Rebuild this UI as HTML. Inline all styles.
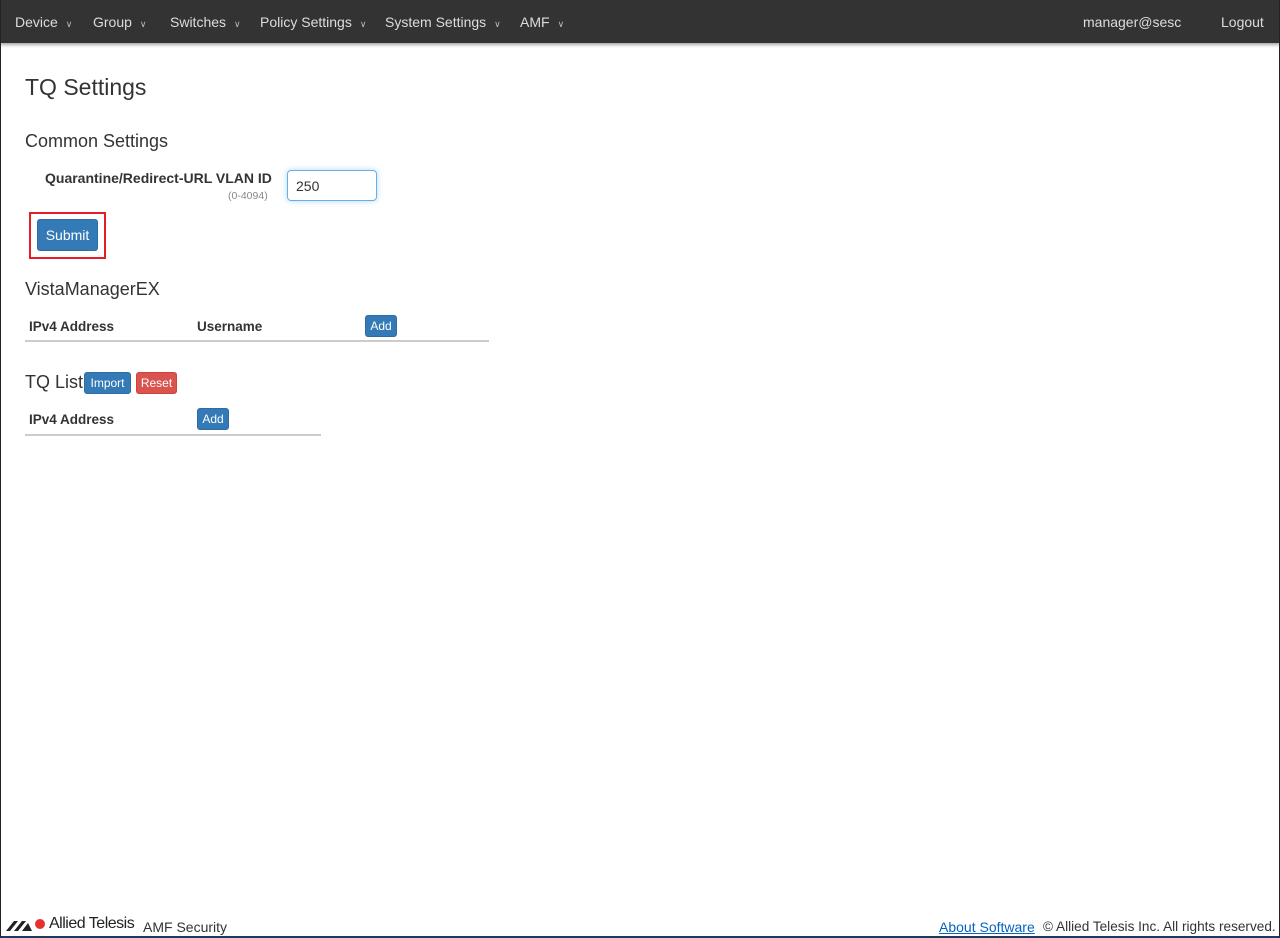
<!DOCTYPE html>
<html><head><style>
*{box-sizing:border-box}
body{margin:0;width:1280px;height:938px;position:relative;font-family:"Liberation Sans",sans-serif;color:#333;background:#fff;overflow:hidden}
.frame{position:absolute;left:0;top:0;width:1280px;height:938px;border-left:1px solid #222;border-right:1px solid #222;border-bottom:2px solid #1e3a5a}
.nav{position:absolute;left:0;top:0;width:1280px;height:43px;background:#333;box-shadow:0 2px 3px rgba(0,0,0,.35);color:#ddd;font-size:14px}
.nav span{position:absolute;top:14px}
.car{font-size:9px;margin-left:8px;color:#bbb}
.t{position:absolute;white-space:nowrap}
.btn{position:absolute;background:#337ab7;color:#fff;border:1px solid #2e6da4;border-radius:3px;font-size:12px;text-align:center}
.line{position:absolute;height:2px;background:#ccc}
</style></head><body>
<div class="nav">
<span style="left:15px">Device<span class="car" style="position:static">&#8744;</span></span>
<span style="left:93px">Group<span class="car" style="position:static">&#8744;</span></span>
<span style="left:170px">Switches<span class="car" style="position:static">&#8744;</span></span>
<span style="left:260px">Policy Settings<span class="car" style="position:static">&#8744;</span></span>
<span style="left:385px">System Settings<span class="car" style="position:static">&#8744;</span></span>
<span style="left:520px">AMF<span class="car" style="position:static">&#8744;</span></span>
<span style="left:1083px">manager@sesc</span>
<span style="left:1221px">Logout</span>
</div>
<div class="t" style="left:25px;top:74px;font-size:23px">TQ Settings</div>
<div class="t" style="left:25px;top:131px;font-size:18px">Common Settings</div>
<div class="t" style="left:45px;top:170px;font-size:14px;font-weight:bold">Quarantine/Redirect-URL VLAN ID</div>
<div class="t" style="left:228px;top:190px;font-size:10.5px;color:#888">(0-4094)</div>
<div style="position:absolute;left:287px;top:170px;width:90px;height:31px;border:1px solid #66afe9;border-radius:4px;box-shadow:0 0 6px rgba(102,175,233,.5);font-size:14px;padding:7px 8px">250</div>
<div style="position:absolute;left:29px;top:212px;width:77px;height:47px;border:2px solid #e31e24"></div>
<div class="btn" style="left:37px;top:219px;width:61px;height:32px;font-size:14px;line-height:30px">Submit</div>
<div class="t" style="left:25px;top:279px;font-size:18px">VistaManagerEX</div>
<div class="t" style="left:29px;top:319px;font-size:13.5px;font-weight:bold">IPv4 Address</div>
<div class="t" style="left:197px;top:319px;font-size:13.5px;font-weight:bold">Username</div>
<div class="btn" style="left:365px;top:315px;width:32px;height:22px;line-height:20px">Add</div>
<div class="line" style="left:25px;top:340px;width:464px"></div>
<div class="t" style="left:25px;top:372px;font-size:18px">TQ List</div>
<div class="btn" style="left:84px;top:372px;width:47px;height:22px;line-height:20px">Import</div>
<div class="btn" style="left:136px;top:372px;width:41px;height:22px;line-height:20px;background:#d9534f;border-color:#d43f3a">Reset</div>
<div class="t" style="left:29px;top:412px;font-size:13.5px;font-weight:bold">IPv4 Address</div>
<div class="btn" style="left:197px;top:408px;width:32px;height:22px;line-height:20px">Add</div>
<div class="line" style="left:25px;top:434px;width:296px"></div>
<svg style="position:absolute;left:6px;top:917px" width="40" height="14" viewBox="0 0 40 14"><path d="M0 14L8 4H12L4 14Z M8 14L16 4H20L12 14Z M16 14L22 6L26 14Z" fill="#222"/><circle cx="34" cy="7" r="5" fill="#e5322d"/></svg>
<div class="t" style="left:49px;top:915px;font-size:16px;color:#222;letter-spacing:-0.5px">Allied Telesis</div>
<div class="t" style="left:143px;top:919px;font-size:14px;color:#333">AMF Security</div>
<div class="t" style="left:939px;top:919px;font-size:14px;color:#0563c1;text-decoration:underline">About Software</div>
<div class="t" style="left:1043px;top:919px;font-size:13.6px;color:#333">© Allied Telesis Inc. All rights reserved.</div>
<div class="frame"></div>
</body></html>
